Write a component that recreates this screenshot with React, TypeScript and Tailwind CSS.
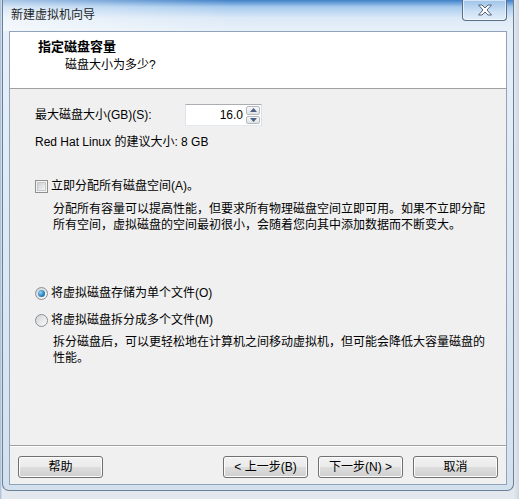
const font = { fontFamily: '"Liberation Sans", "Noto Sans CJK SC", sans-serif' };

function WinButton({ label }: { label: string }) {
  return (
    <button
      className="h-[22px] w-[85px] rounded-[3px] border border-[#707070] bg-[linear-gradient(#f2f2f2_0%,#ebebeb_50%,#dddddd_51%,#cfcfcf_100%)] text-[12px] leading-none text-black shadow-[inset_0_0_0_1px_#fcfcfc]"
    >
      {label}
    </button>
  );
}

function CheckBox() {
  return (
    <span className="flex h-[13px] w-[13px] shrink-0 items-center justify-center border border-[#8e8f8f] bg-[#f4f4f4]">
      <span className="h-[9px] w-[9px] border border-[#c8c8c8] bg-[linear-gradient(135deg,#cbcfd5,#f6f6f6)]" />
    </span>
  );
}

function Radio({ checked }: { checked?: boolean }) {
  return (
    <span className="flex h-[13px] w-[13px] shrink-0 items-center justify-center rounded-full border border-[#8e8f8f] bg-[linear-gradient(135deg,#cfd2d6,#fbfbfb)]">
      {checked ? (
        <span className="h-[7px] w-[7px] rounded-full bg-[radial-gradient(circle_at_35%_35%,#8fd4f5,#2a7fb8_60%,#1c5a8a)]" />
      ) : (
        <span className="h-[7px] w-[7px] rounded-full bg-[linear-gradient(135deg,#d9dbde,#f3f3f3)]" />
      )}
    </span>
  );
}

function SpinBox() {
  return (
    <div className="flex h-[22px] w-[77px] border border-[#abadb3] border-b-[#e3e9ef] border-l-[#e2e3ea] border-r-[#dbdfe6] bg-white">
      <div className="flex flex-1 items-center justify-end pr-[3px] text-[12px]">16.0</div>
      <div className="flex w-[15px] flex-col gap-[1px] py-[1px] pr-[1px]">
        <div className="flex flex-1 items-center justify-center rounded-[2px] border border-[#b5b9bf] bg-[linear-gradient(#f7f7f7,#dfe2e6)]">
          <svg width="7" height="4" viewBox="0 0 7 4">
            <path d="M0 4 L3.5 0 L7 4 Z" fill="#4d6185" />
          </svg>
        </div>
        <div className="flex flex-1 items-center justify-center rounded-[2px] border border-[#b5b9bf] bg-[linear-gradient(#f7f7f7,#dfe2e6)]">
          <svg width="7" height="4" viewBox="0 0 7 4">
            <path d="M0 0 L3.5 4 L7 0 Z" fill="#4d6185" />
          </svg>
        </div>
      </div>
    </div>
  );
}

function CloseButton() {
  return (
    <div className="flex h-[21px] w-[45px] items-center justify-center rounded-b-[4px] border border-t-0 border-[#5b6f88] bg-[linear-gradient(#9cc3ea,#cfe2f5_60%,#e4eef9)] shadow-[inset_0_0_0_1px_rgba(255,255,255,0.55)]">
      <svg width="16" height="12" viewBox="0 0 16 12">
        <path
          d="M1.5 1 L5 1 L8 4 L11 1 L14.5 1 L10 6 L14.5 11 L11 11 L8 8 L5 11 L1.5 11 L6 6 Z"
          fill="#ffffff"
          stroke="#53657c"
          strokeWidth="1"
          strokeLinejoin="round"
        />
      </svg>
    </div>
  );
}

export default function App() {
  return (
    <div
      className="flex h-[499px] w-[519px] bg-[linear-gradient(90deg,#9db7d6_0px,#e3e8ee_2px,#e3e8ee_514px,#cfd6de_519px)] pl-[2px] text-black"
      style={font}
    >
      <div className="flex h-[491px] w-[512px] flex-col rounded-b-[7px] border border-t-0 border-[#6a7f98] bg-[linear-gradient(#3f80c8_0px,#a7cbee_7px,#dce9f7_18px,#e7f0f9_30px,#d3e0ee_100%)]">
        {/* title bar */}
        <div className="flex h-[31px] items-start justify-between bg-[linear-gradient(90deg,rgba(255,255,255,0.55),rgba(255,255,255,0)_45%)] pr-[6px]">
          <div className="pl-[8px] pt-[8px] text-[12px] leading-[14px] text-[#1e1e1e]">新建虚拟机向导</div>
          <CloseButton />
        </div>

        {/* client area */}
        <div className="mx-[6px] flex h-[454px] flex-col border border-[#8fa3ba] bg-[#f0f0f0]">
          <div className="h-[57px] border-b border-[#a0a0a0] bg-white">
            <div className="pl-[28px] pt-[7px] text-[13px] font-bold leading-[16px]">指定磁盘容量</div>
            <div className="pl-[55px] pt-[2px] text-[12px] leading-[16px]">磁盘大小为多少?</div>
          </div>

          <div className="flex flex-1 flex-col pl-[25px] pt-[15px] text-[12px] leading-[16px]">
            <div className="flex items-center">
              <div className="w-[150px]">最大磁盘大小(GB)(S):</div>
              <SpinBox />
            </div>
            <div className="mt-[8px]">Red Hat Linux 的建议大小: 8 GB</div>

            <div className="mt-[28px] flex items-center gap-[3px]">
              <CheckBox />
              <span>立即分配所有磁盘空间(A)。</span>
            </div>
            <div className="ml-[18px] mt-[7px] whitespace-nowrap">
              分配所有容量可以提高性能，但要求所有物理磁盘空间立即可用。如果不立即分配
              <br />
              所有空间，虚拟磁盘的空间最初很小，会随着您向其中添加数据而不断变大。
            </div>

            <div className="mt-[52px] flex items-center gap-[3px]">
              <Radio checked />
              <span>将虚拟磁盘存储为单个文件(O)</span>
            </div>
            <div className="mt-[11px] flex items-center gap-[3px]">
              <Radio />
              <span>将虚拟磁盘拆分成多个文件(M)</span>
            </div>
            <div className="ml-[18px] mt-[6px] whitespace-nowrap">
              拆分磁盘后，可以更轻松地在计算机之间移动虚拟机，但可能会降低大容量磁盘的
              <br />
              性能。
            </div>
          </div>

          <div className="border-t border-[#a0a0a0] border-b border-b-white" />
          <div className="flex items-center px-[8px] pb-[6px] pt-[9px]">
            <WinButton label="帮助" />
            <div className="flex-1" />
            <div className="flex gap-[10px]">
              <WinButton label="< 上一步(B)" />
              <WinButton label="下一步(N) >" />
              <WinButton label="取消" />
            </div>
          </div>
        </div>
      </div>
    </div>
  );
}
